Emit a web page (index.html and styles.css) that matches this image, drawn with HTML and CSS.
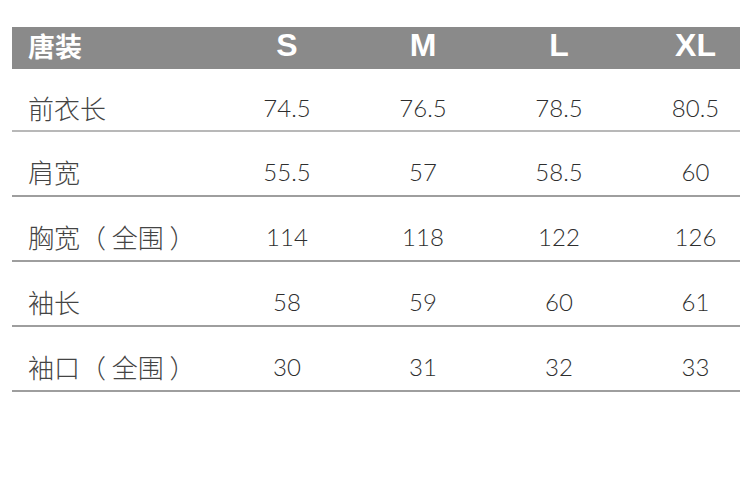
FILE: index.html
```html
<!DOCTYPE html>
<html lang="zh">
<head>
<meta charset="utf-8">
<link rel="stylesheet" href="styles.css">
</head>
<body>
<div class="table">
  <div class="row head">
    <div class="label">唐装</div>
    <div class="cell">S</div>
    <div class="cell">M</div>
    <div class="cell">L</div>
    <div class="cell last">XL</div>
  </div>
  <div class="row first">
    <div class="label">前衣长</div>
    <div class="cell">74.5</div>
    <div class="cell">76.5</div>
    <div class="cell">78.5</div>
    <div class="cell last">80.5</div>
  </div>
  <div class="row">
    <div class="label">肩宽</div>
    <div class="cell">55.5</div>
    <div class="cell">57</div>
    <div class="cell">58.5</div>
    <div class="cell last">60</div>
  </div>
  <div class="row">
    <div class="label">胸宽（ 全围 ）</div>
    <div class="cell">114</div>
    <div class="cell">118</div>
    <div class="cell">122</div>
    <div class="cell last">126</div>
  </div>
  <div class="row">
    <div class="label">袖长</div>
    <div class="cell">58</div>
    <div class="cell">59</div>
    <div class="cell">60</div>
    <div class="cell last">61</div>
  </div>
  <div class="row">
    <div class="label">袖口（ 全围 ）</div>
    <div class="cell">30</div>
    <div class="cell">31</div>
    <div class="cell">32</div>
    <div class="cell last">33</div>
  </div>
</div>
</body>
</html>
```
FILE: styles.css
```css
html, body {
  margin: 0;
  padding: 0;
  background: #fff;
}
body {
  width: 750px;
  height: 486px;
  overflow: hidden;
}
.table {
  margin: 27px 0 0 12px;
  width: 728px;
}
.row {
  display: grid;
  grid-template-columns: 207px 136px 136px 136px 113px;
  align-items: center;
  height: 63px;
  border-bottom: 2px solid #9e9e9e;
  box-sizing: border-box;
  padding-top: 16px;
  color: #4a4a4a;
}
.row.first {
  border-bottom-color: #b8b8b8;
}
.row + .row + .row {
  height: 65px;
}
.row.head {
  height: 42px;
  background: #8a8a8a;
  border-bottom: none;
  padding-top: 0;
  color: #fff;
}
.label {
  padding-left: 16px;
  font-family: "Noto Sans CJK SC", sans-serif;
  font-weight: 300;
  font-size: 26px;
  color: #444;
  white-space: pre;
}
.cell {
  text-align: center;
  font-family: "Lato", sans-serif;
  font-weight: 300;
  font-size: 24px;
  color: #2e2e2e;
}
.cell.last {
  padding-left: 24px;
}
.head .label {
  font-weight: 700;
  font-size: 27px;
  color: #fff;
  margin-top: -6px;
}
.head .cell {
  font-family: "Liberation Sans", Arial, sans-serif;
  font-weight: 700;
  font-size: 32px;
  color: #fff;
  margin-top: -6px;
}
```
